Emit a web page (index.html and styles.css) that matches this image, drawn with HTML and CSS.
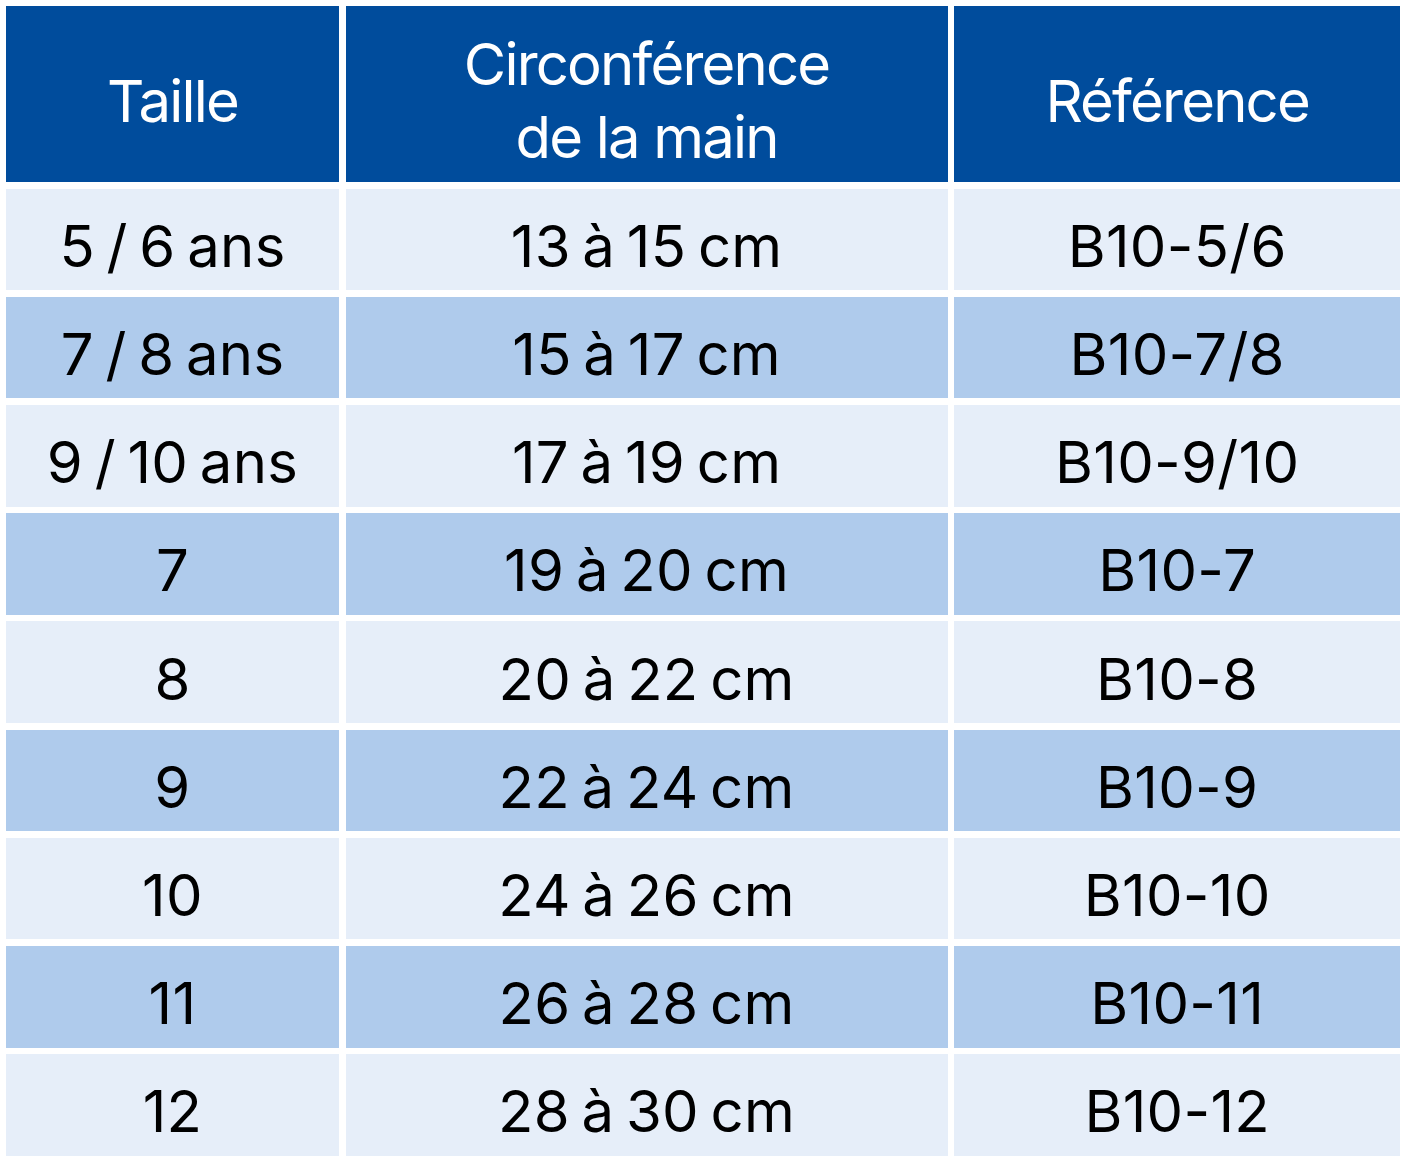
FILE: index.html
```html
<!DOCTYPE html>
<html lang="fr">
<head>
<meta charset="utf-8">
<title>Tailles</title>
<link rel="stylesheet" href="styles.css">
</head>
<body>
<div class="table">
  <div class="cell head">Taille</div>
  <div class="cell head">Circonférence<br>de la main</div>
  <div class="cell head">Référence</div>

  <div class="cell light">5 / 6 ans</div>
  <div class="cell light">13 à 15 cm</div>
  <div class="cell light">B10-5/6</div>

  <div class="cell dark">7 / 8 ans</div>
  <div class="cell dark">15 à 17 cm</div>
  <div class="cell dark">B10-7/8</div>

  <div class="cell light">9 / 10 ans</div>
  <div class="cell light">17 à 19 cm</div>
  <div class="cell light">B10-9/10</div>

  <div class="cell dark">7</div>
  <div class="cell dark">19 à 20 cm</div>
  <div class="cell dark">B10-7</div>

  <div class="cell light">8</div>
  <div class="cell light">20 à 22 cm</div>
  <div class="cell light">B10-8</div>

  <div class="cell dark">9</div>
  <div class="cell dark">22 à 24 cm</div>
  <div class="cell dark">B10-9</div>

  <div class="cell light">10</div>
  <div class="cell light">24 à 26 cm</div>
  <div class="cell light">B10-10</div>

  <div class="cell dark">11</div>
  <div class="cell dark">26 à 28 cm</div>
  <div class="cell dark">B10-11</div>

  <div class="cell light">12</div>
  <div class="cell light">28 à 30 cm</div>
  <div class="cell light">B10-12</div>
</div>
</body>
</html>
```
FILE: styles.css
```css
html, body {
  margin: 0;
  padding: 0;
  background: #ffffff;
}
body {
  padding: 6px 4px 6px 6px;
  font-family: Inter, "Noto Sans", sans-serif;
}
.table {
  display: grid;
  grid-template-columns: 333px 602px 446px;
  grid-template-rows: 176px repeat(9, 101.6px);
  gap: 6.6px;
}
.cell {
  display: flex;
  align-items: center;
  justify-content: center;
  text-align: center;
  font-size: 58px;
  line-height: 73px;
  color: #000000;
  letter-spacing: 0.3px;
  word-spacing: -5px;
  padding-top: 14px;
  box-sizing: border-box;
}
.head {
  background: #004c9c;
  color: #ffffff;
  letter-spacing: -1.8px;
  word-spacing: 0;
}
.light {
  background: #e6eef9;
}
.dark {
  background: #afcbec;
}
```
